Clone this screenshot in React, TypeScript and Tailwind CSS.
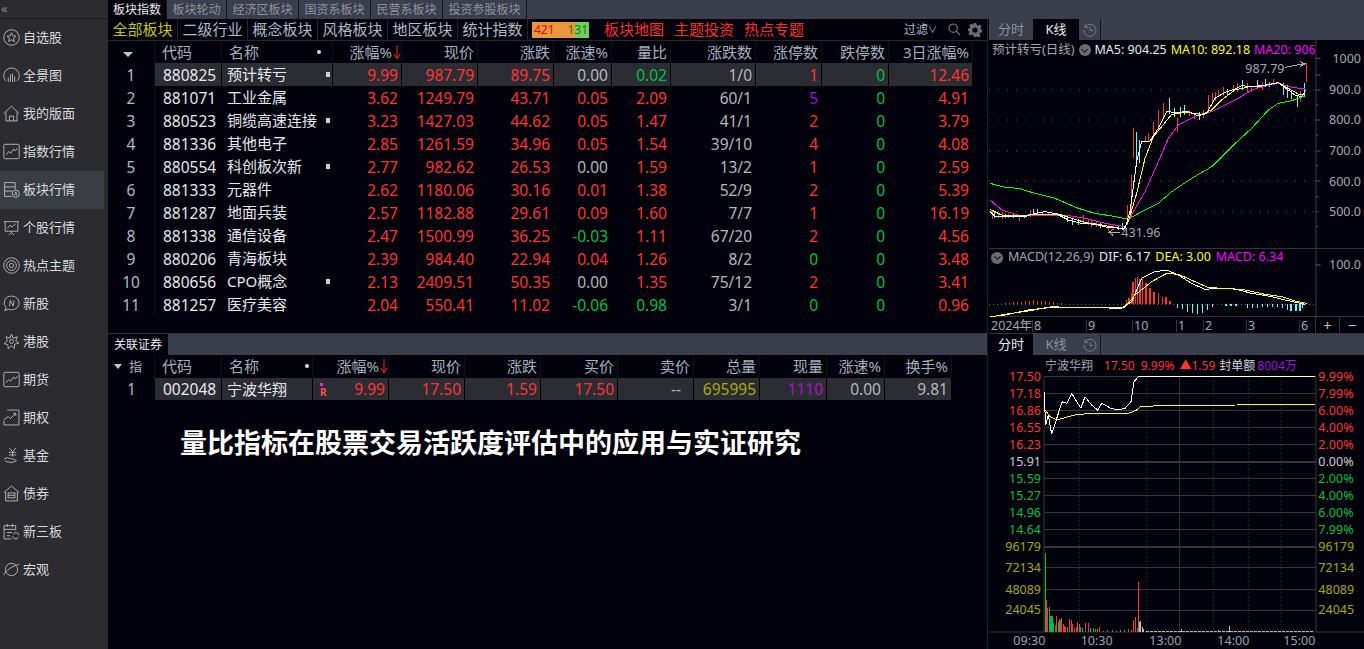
import React from "react";

const RED = "#ff3333";
const GREEN = "#00c040";
const CYAN = "#54ffff";

const Glyph = ({ children }: { children: React.ReactNode }) => (
  <svg viewBox="0 0 16 16" className="w-[17px] h-[17px] shrink-0" fill="none" stroke="#b4b4b4" strokeWidth="0.9">
    {children}
  </svg>
);

const icons: React.ReactNode[] = [
  <><circle cx="8" cy="8" r="7.3" /><path d="M8 3.6l1.3 2.9 3 .3-2.3 2 .7 3L8 10.2 5.3 11.8l.7-3-2.3-2 3-.3z" /></>,
  <><path d="M2.5 13A7.3 7.3 0 1 1 13.5 13" /><path d="M5 14V10M7 14V7M9 14V6M11 14V9" /></>,
  <><path d="M.8 8L8 1.2 15.2 8" /><path d="M2.8 7v8h10.4V7" /><path d="M6 15v-4.5h4V15" /></>,
  <><rect x=".8" y="1.2" width="14.4" height="13.6" rx="1" /><path d="M3 11l2.5-3 2 1.5L10 5.500l1.500 2L13.500 5" /></>,
  <><path d="M8 14.500H1.500V1.500h10V8" /><path d="M1.500 5.500h10M1.500 9.500h7" /><circle cx="12" cy="12" r="3.400" /><path d="M10.800 13.800L12 10.200l1.200 3.600" /></>,
  <><path d="M.8 2.500h14.400M2 2.500v9h12v-9M8 11.500V13M5.500 15L8 13l2.500 2" /><path d="M4 9l2.500-3 2 1.500L12 4.500" /></>,
  <><circle cx="8" cy="8" r="7.300" /><circle cx="8" cy="8" r="4.600" /><circle cx="8" cy="8" r="2" /></>,
  <><path d="M8 1a7 6.500 0 0 0-5 11l-1.500 2.800 3.500-1.500A7 6.500 0 1 0 8 1z" /><path d="M6 10.500L7 5l2.500 5.500L10.500 5" /></>,
  <><path d="M8 1l1.500 4 4-1.500-1.500 4 3 2-4 1-.5 4L8 12l-3 3-.5-4-3.500-1 3-2.500L3 3.500l3.500 1.500z" /><circle cx="8" cy="8" r="1.800" /></>,
  <><rect x=".8" y="1.200" width="14.400" height="13.600" rx="1" /><path d="M3 11l2.500-3 2 1.500L10 5.500l1.500 2L13.500 5" /></>,
  <><path d="M4 1H15V15H1V11" /><path d="M1 10l4-3 2 2 5-5M9.500 4H12v2.500" /></>,
  <><path d="M6 1l3 3.500L12 1M5.500 5h7M5.500 7.500h7M9 4.500V9" /><path d="M1 11.500l3-1.500 3 1 4 .5 1.500 1.500-4 1.500-4.500-.5-2-1" /></>,
  <><path d="M.8 7L8 1l7.200 6" /><path d="M2.500 6.500V15h11V6.500" /><rect x="4.800" y="7.500" width="6.400" height="4.500" /><path d="M4.800 9.700h6.400" /></>,
  <><path d="M8 15H1V2.500h11V7M1 6h11M4 .8v3M9 .8v3M3.500 9h5M3.500 12h3" /><path d="M15 11.500a3 3 0 0 0-5.500-1M9 12.500a3 3 0 0 0 5.500 1" /></>,
  <><circle cx="8" cy="8" r="5.800" /><path d="M1 13.500c-1-1.500 4-6 8-8s6-3 6.500-1.800" /></>,
];

const menu = ["自选股", "全景图", "我的版面", "指数行情", "板块行情", "个股行情", "热点主题", "新股", "港股", "期货", "期权", "基金", "债券", "新三板", "宏观"];

const topTabs = [
  ["板块指数", "w-[59px]"],
  ["板块轮动", "w-[60px]"],
  ["经济区板块", "w-[72px]"],
  ["国资系板块", "w-[72px]"],
  ["民营系板块", "w-[72px]"],
  ["投资参股板块", "w-[84px]"],
];

const subTabs = ["全部板块", "二级行业", "概念板块", "风格板块", "地区板块", "统计指数"];

const rows: [string, string, boolean, string, string, string, string, string, string, string, string][] = [
  ["880825", "预计转亏", true, "9.99", "987.79", "89.75", "0.00", "0.02", "1/0", "1", "12.46"],
  ["881071", "工业金属", false, "3.62", "1249.79", "43.71", "0.05", "2.09", "60/1", "5", "4.91"],
  ["880523", "铜缆高速连接", true, "3.23", "1427.03", "44.62", "0.05", "1.47", "41/1", "2", "3.79"],
  ["881336", "其他电子", false, "2.85", "1261.59", "34.96", "0.05", "1.54", "39/10", "4", "4.08"],
  ["880554", "科创板次新", true, "2.77", "982.62", "26.53", "0.00", "1.59", "13/2", "1", "2.59"],
  ["881333", "元器件", false, "2.62", "1180.06", "30.16", "0.01", "1.38", "52/9", "2", "5.39"],
  ["881287", "地面兵装", false, "2.57", "1182.88", "29.61", "0.09", "1.60", "7/7", "1", "16.19"],
  ["881338", "通信设备", false, "2.47", "1500.99", "36.25", "-0.03", "1.11", "67/20", "2", "4.56"],
  ["880206", "青海板块", false, "2.39", "984.40", "22.94", "0.04", "1.26", "8/2", "0", "3.48"],
  ["880656", "CPO概念", true, "2.13", "2409.51", "50.35", "0.00", "1.35", "75/12", "2", "3.41"],
  ["881257", "医疗美容", false, "2.04", "550.41", "11.02", "-0.06", "0.98", "3/1", "0", "0.96"],
];

const mainGrid = "grid grid-cols-[47px_67px_101px_10px_69px_76px_76px_58px_59px_85px_66px_67px_84px] w-[865px]";
const subGrid = "grid grid-cols-[47px_67px_91px_76px_76px_76px_77px_76px_66px_67px_58px_67px] w-[844px]";

const cellBase = "flex items-center justify-end border-r whitespace-nowrap overflow-hidden";
const bodyCell = `${cellBase} pr-[3px] pt-[2px] border-[#02020c]`;

const signColor = (v: string) => {
  const n = parseFloat(v);
  if (n > 0) return "text-[#ff3333]";
  if (n < 0) return "text-[#00c040]";
  return "text-[#b4b8bd]";
};

const HeadCell = ({ children, arrow }: { children?: React.ReactNode; arrow?: boolean }) => (
  <div className={`${cellBase} border-[#10101a] pb-[4px] ${arrow ? "" : "pr-[3px]"}`}>
    {children}
    {arrow && (
      <svg viewBox="0 0 8 15" className="w-[8px] h-[15px] ml-px" fill="none" stroke="#ff2020" strokeWidth="1">
        <path d="M4 0v13M1 9l3 5 3-5" />
      </svg>
    )}
  </div>
);

const NameDot = () => <span className="w-[4px] h-[4px] rounded-full bg-[#d8d8d8]" />;

const MainTable = () => (
  <div className="text-[15.5px]">
    <div className={`${mainGrid} h-[22px] text-[15px] text-[#a3b0bd]`}>
      <div className="flex items-center justify-center border-r border-[#10101a] pr-[6px]">
        <span className="w-0 h-0 border-x-[5px] border-x-transparent border-t-[5px] border-t-[#c8c8c8]" />
      </div>
      <div className="flex items-center pl-[7px] pb-[4px] border-r border-[#10101a]">代码</div>
      <div className="flex items-center justify-between pl-[7px] pr-[2px] pb-[4px]">名称<NameDot /></div>
      <HeadCell />
      <HeadCell arrow>涨幅%</HeadCell>
      <HeadCell>现价</HeadCell>
      <HeadCell>涨跌</HeadCell>
      <HeadCell>涨速%</HeadCell>
      <HeadCell>量比</HeadCell>
      <HeadCell>涨跌数</HeadCell>
      <HeadCell>涨停数</HeadCell>
      <HeadCell>跌停数</HeadCell>
      <HeadCell>3日涨幅%</HeadCell>
    </div>
    {rows.map((r, i) => {
      const sel = i === 0 ? "bg-[#2b2d33]" : "";
      return (
        <div key={r[0]} className={`${mainGrid} h-[23px] leading-none`}>
          <div className="flex items-center justify-center pt-[2px] text-[#a9bccb] border-r border-[#10101a]">{i + 1}</div>
          <div className={`flex items-center pl-[8px] pt-[2px] text-[#e4e8ee] border-r border-[#02020c] ${sel}`}>{r[0]}</div>
          <div className={`flex items-center pl-[5px] text-[15px] text-[#e4e8ee] whitespace-nowrap ${sel}`}>{r[1]}</div>
          <div className={`flex items-center border-r border-[#02020c] ${sel}`}>
            {r[2] && <span className="ml-[3px] w-[4px] h-[5px] bg-[#d0d0d0]" />}
          </div>
          <div className={`${bodyCell} text-[#ff3333] ${sel}`}>{r[3]}</div>
          <div className={`${bodyCell} text-[#ff3333] ${sel}`}>{r[4]}</div>
          <div className={`${bodyCell} text-[#ff3333] ${sel}`}>{r[5]}</div>
          <div className={`${bodyCell} ${signColor(r[6])} ${sel}`}>{r[6]}</div>
          <div className={`${bodyCell} ${parseFloat(r[7]) < 1 ? "text-[#00c040]" : "text-[#ff3333]"} ${sel}`}>{r[7]}</div>
          <div className={`${bodyCell} text-[#b4b8bd] ${sel}`}>{r[8]}</div>
          <div className={`${bodyCell} ${r[9] === "5" ? "text-[#a010d8]" : r[9] === "0" ? "text-[#00c040]" : "text-[#ff3333]"} ${sel}`}>{r[9]}</div>
          <div className={`${bodyCell} text-[#00c040] ${sel}`}>0</div>
          <div className={`${bodyCell} text-[#ff3333] ${sel}`}>{r[10]}</div>
        </div>
      );
    })}
  </div>
);

const SubTable = () => {
  const cell = `${bodyCell} bg-[#2b2d33]`;
  const left = "flex items-center text-[#e4e8ee] bg-[#2b2d33] border-r border-[#02020c]";
  return (
    <div className="text-[15.5px]">
      <div className={`${subGrid} h-[23px] text-[15px] text-[#a3b0bd]`}>
        <div className="flex items-center pl-[6px] gap-[7px] pb-[4px] border-r border-[#10101a]">
          <span className="w-0 h-0 border-x-[4px] border-x-transparent border-t-[5px] border-t-[#c8c8c8]" />
          <span className="text-[13px]">指</span>
        </div>
        <div className="flex items-center pl-[7px] pb-[4px] border-r border-[#10101a]">代码</div>
        <div className="flex items-center justify-between pl-[7px] pr-[3px] pb-[4px] border-r border-[#10101a]">名称<NameDot /></div>
        <HeadCell arrow>涨幅%</HeadCell>
        <HeadCell>现价</HeadCell>
        <HeadCell>涨跌</HeadCell>
        <HeadCell>买价</HeadCell>
        <HeadCell>卖价</HeadCell>
        <HeadCell>总量</HeadCell>
        <HeadCell>现量</HeadCell>
        <HeadCell>涨速%</HeadCell>
        <HeadCell>换手%</HeadCell>
      </div>
      <div className={`${subGrid} h-[22px] leading-none`}>
        <div className="flex items-center justify-center pt-[2px] text-[#a9bccb]">1</div>
        <div className={`${left} pl-[8px] pt-[2px]`}>002048</div>
        <div className={`${left} pl-[5px] text-[15px]`}>宁波华翔</div>
        <div className={`${cell} !justify-between text-[#ff3333]`}>
          <span className="flex flex-col pl-[7px] items-start">
            <span className="w-[3px] h-[3px] bg-[#e820e8]" />
            <span className="text-[10px] font-bold text-[#ff5050] leading-[12px]">R</span>
          </span>
          9.99
        </div>
        <div className={`${cell} text-[#ff3333]`}>17.50</div>
        <div className={`${cell} text-[#ff3333]`}>1.59</div>
        <div className={`${cell} text-[#ff3333]`}>17.50</div>
        <div className={`${cellBase} pr-[12px] pt-[2px] border-[#02020c] bg-[#2b2d33] text-[#b4b8bd]`}>--</div>
        <div className={`${cell} text-[#a8a800]`}>695995</div>
        <div className={`${cell} text-[#b010c8]`}>1110</div>
        <div className={`${cell} text-[#b4b8bd]`}>0.00</div>
        <div className={`${cell} text-[#b4b8bd]`}>9.81</div>
      </div>
    </div>
  );
};

const PanelTabs = ({ active }: { active: 0 | 1 }) => (
  <div className="flex h-[21px] bg-[#3b3e4c] text-[13px] leading-none shrink-0">
    <div className={`w-[44px] flex items-center justify-center ${active === 0 ? "bg-[#02020c] text-[#e8ecf0]" : "text-[#8e929c]"}`}>分时</div>
    <div className={`w-[46px] flex items-center justify-center ${active === 1 ? "bg-[#02020c] text-[#e8ecf0]" : "text-[#8e929c]"}`}>K线</div>
    <div className="w-[22px] flex items-center justify-center border-r border-[#15151c]">
      <svg viewBox="0 0 14 14" className="w-[14px] h-[14px]" fill="none" stroke="#777a84" strokeWidth="1">
        <path d="M2 4a6 6 0 1 1-1 3M2 1.500V4.500h3M7 4v3.500h3" />
      </svg>
    </div>
  </div>
);

const candles: [number, number, number, string][] = [
  [20, 585, 612, RED], [28, 590, 610, CYAN], [38, 595, 608, RED], [50, 592, 612, RED], [60, 598, 608, CYAN], [70, 598, 610, RED], [85, 595, 608, CYAN], [102, 600, 618, RED],
  [118, 600, 610, CYAN], [134, 585, 605, RED], [143, 582, 600, CYAN], [155, 582, 598, CYAN], [170, 590, 600, CYAN], [190, 594, 604, RED], [245, 600, 620, CYAN],
  [262, 610, 630, CYAN], [280, 612, 630, CYAN], [295, 600, 625, RED], [308, 612, 630, RED], [318, 615, 635, RED], [332, 622, 636, RED], [345, 625, 640, CYAN], [368, 630, 648, RED],
  [385, 632, 645, RED], [400, 630, 645, CYAN], [412, 625, 645, CYAN], [427, 570, 630, RED], [437, 480, 605, RED], [443, 340, 430, RED], [452, 350, 445, CYAN],
  [463, 375, 445, CYAN], [480, 362, 382, RED], [490, 355, 382, RED], [505, 320, 362, RED], [520, 285, 345, RED], [535, 265, 312, RED],
  [552, 250, 298, CYAN], [566, 280, 305, CYAN], [575, 310, 350, RED], [585, 275, 305, CYAN], [598, 270, 300, CYAN], [612, 285, 302, RED],
  [628, 295, 312, RED], [643, 290, 315, CYAN], [655, 285, 310, RED], [668, 240, 295, RED], [680, 235, 262, RED], [690, 230, 258, RED],
  [700, 225, 245, RED], [715, 215, 242, RED], [725, 222, 242, CYAN], [745, 210, 232, RED], [755, 205, 230, RED], [770, 195, 226, CYAN],
  [785, 205, 232, RED], [797, 215, 232, RED], [815, 195, 220, CYAN], [830, 200, 225, RED], [840, 192, 215, CYAN], [852, 200, 215, CYAN],
  [865, 192, 210, RED], [895, 205, 240, CYAN], [905, 210, 250, CYAN], [918, 228, 252, CYAN], [935, 240, 275, CYAN], [945, 228, 262, RED],
  [958, 205, 245, CYAN], [964, 145, 200, RED],
];

const KChart = () => (
  <div className="relative h-[209px] shrink-0">
    <svg viewBox="12 75 1125 627" className="w-[375px] h-[209px] block">
      {[225, 315, 408, 498, 590].map((y) => (
        <line key={y} x1="12" x2="993" y1={y} y2={y} stroke="#55555c" strokeWidth="3" strokeDasharray="3 24" />
      ))}
      <line x1="993" x2="993" y1="75" y2="702" stroke="#3a3a40" strokeWidth="3" />
      {[130, 180, 225, 270, 315, 360, 408, 452, 498, 545, 590, 635].map((y) => (
        <line key={y} x1="993" x2={y === 130 || (y - 225) % 90 < 5 ? 1007 : 1000} y1={y} y2={y} stroke="#55555c" strokeWidth="3" />
      ))}
      {candles.map(([x, a, b, c], i) => (
        <rect key={i} x={x} y={a} width="3" height={b - a} fill={c} shapeRendering="crispEdges" />
      ))}
      <g fill="none" strokeWidth="3" shapeRendering="crispEdges">
        <polyline stroke="#00ff00" points="15,505 60,517 100,520 150,535 210,550 280,580 330,595 380,603 430,613 470,590 520,565 560,530 620,490 680,455 740,395 800,340 850,285 880,265 920,257 960,243" />
        <polyline stroke="#ff00ff" points="15,555 50,585 100,600 180,600 240,600 300,610 360,625 420,635 445,590 480,530 520,440 550,370 580,330 640,300 680,290 720,270 760,250 800,225 840,213 880,205 920,217 960,222" />
        <polyline stroke="#ffff00" points="15,583 50,600 100,603 150,598 220,597 260,610 300,622 350,630 415,642 430,620 455,535 480,430 505,365 530,335 560,298 600,292 650,298 680,285 710,255 750,225 790,216 830,213 880,203 910,220 945,240 960,235" />
        <polyline stroke="#ffffff" points="15,590 30,605 60,603 120,605 150,595 180,590 215,597 250,615 290,625 330,628 370,638 420,640 435,590 455,440 470,378 495,378 520,340 545,290 570,292 610,290 640,303 665,295 690,250 720,232 750,222 770,212 800,215 840,210 880,203 910,225 930,240 950,245 962,225" />
        <path stroke="#b0b0b0" d="M900 157L958 146M945 140L960 146L945 155M372 652H405M385 642L372 652L385 662" />
      </g>
      <g fill="#a4a8ae" fontSize="37.500">
        <text x="781" y="173">987.79</text>
        <text x="409" y="665">431.96</text>
      </g>
      <g fill="#a4a8ae" fontSize="37.500" textAnchor="end">
        {["1000", "900.0", "800.0", "700.0", "600.0", "500.0"].map((t, i) => (
          <text key={t} x="1128" y={144 + i * 92}>{t}</text>
        ))}
      </g>
    </svg>
    <div className="absolute top-[1px] left-[3px] w-[323px] h-[18px] flex items-center gap-[4px] overflow-hidden whitespace-nowrap text-[12.500px] leading-none">
      <span className="text-[#a4a8ae] w-[83px]">预计转亏(日线)</span>
      <span className="w-[12px] h-[12px] rounded-full bg-[#6c6c6c] shrink-0 flex items-center justify-center">
        <span className="w-[5px] h-[5px] border-r border-b border-[#111] rotate-45 -mt-[2px]" />
      </span>
      <span className="text-[#e6ecf4]">MA5: 904.25</span>
      <span className="text-[#ffff00]">MA10: 892.18</span>
      <span className="text-[#ff00ff]">MA20: 906.41</span>
    </div>
  </div>
);

const macdRed = [60, 72, 84, 96, 108, 120, 132, 144, 156, 168, 180, 192, 204, 216, 228];
const macdRedH = [4, 5, 6, 7, 8, 9, 11, 13, 11, 10, 9, 7, 6, 4, 3];
const macdTall: [number, number][] = [[422, 165], [430, 160], [437, 145], [442, 110], [449, 100], [455, 97], [462, 102], [470, 103], [480, 115], [492, 128], [505, 140], [518, 145], [530, 155], [540, 157], [553, 168]];
const macdCyan: [number, number][] = [[575, 190], [590, 192], [605, 200], [620, 205], [635, 208], [650, 205], [665, 195], [680, 185], [720, 184], [735, 182], [750, 182], [785, 188], [800, 189], [815, 188], [830, 186], [845, 186], [860, 186], [875, 186], [890, 188], [905, 196], [915, 198], [930, 198], [942, 198], [950, 190]];

const MacdChart = () => (
  <div className="relative h-[68px] border-t border-[#33333a] shrink-0 -mt-px">
    <svg viewBox="12 12 1125 204" className="w-[375px] h-[68px] block">
      <line x1="12" x2="993" y1="178" y2="178" stroke="#70757a" strokeWidth="3" strokeDasharray="3 9" />
      <line x1="993" x2="993" y1="12" y2="216" stroke="#3a3a40" strokeWidth="3" />
      <line x1="993" x2="1007" y1="60" y2="60" stroke="#55555c" strokeWidth="3" />
      <g shapeRendering="crispEdges">
        {macdRed.map((x, i) => (
          <rect key={x} x={x} y={178 - macdRedH[i]} width="3" height={macdRedH[i]} fill={RED} />
        ))}
        {macdTall.map(([x, y]) => (
          <rect key={x} x={x} y={y} width="5" height={178 - y} fill={RED} />
        ))}
        {macdCyan.map(([x, y]) => (
          <rect key={x} x={x} y={178} width="5" height={y - 178} fill={CYAN} />
        ))}
      </g>
      <g fill="none" strokeWidth="3" shapeRendering="crispEdges">
        <polyline stroke="#ffffff" points="15,215 60,210 130,195 200,187 260,187 330,188 410,190 440,170 470,100 510,80 545,75 580,90 620,115 660,133 700,130 750,132 800,145 860,155 900,165 960,178" />
        <polyline stroke="#ffff00" points="15,216 60,208 130,198 200,185 260,188 330,188 420,187 450,150 500,110 545,85 580,88 630,110 670,128 720,130 780,135 840,148 890,155 930,168 965,175" />
      </g>
      <text x="1128" y="72" textAnchor="end" fill="#a4a8ae" fontSize="37.500">100.0</text>
    </svg>
    <div className="absolute top-[1px] left-[2px] h-[15px] flex items-center gap-[5px] whitespace-nowrap text-[12.500px] leading-none">
      <span className="w-[12px] h-[12px] rounded-full bg-[#6c6c6c] shrink-0 flex items-center justify-center">
        <span className="w-[5px] h-[5px] border-r border-b border-[#111] rotate-45 -mt-[2px]" />
      </span>
      <span className="text-[#a4a8ae]">MACD(12,26,9)</span>
      <span className="text-[#e6ecf4]">DIF: 6.17</span>
      <span className="text-[#ffff00]">DEA: 3.00</span>
      <span className="text-[#ff00ff]">MACD: 6.34</span>
    </div>
  </div>
);

const months = [
  ["8", "w-[54px]"],
  ["9", "w-[46px]"],
  ["10", "w-[44px]"],
  ["1", "w-[27px]"],
  ["2", "w-[43px]"],
  ["3", "w-[53px]"],
  ["6", "w-[14px]"],
];

const KAxis = () => (
  <div className="flex h-[18px] border-y border-[#33333a] text-[12.500px] text-[#a4a8ae] leading-none shrink-0">
    <div className="w-[327px] flex items-center pl-[2px] pt-[2px] border-r border-[#33333a] whitespace-nowrap">
      <span className="w-[41px]">2024年</span>
      {months.map(([m, w]) => (
        <span key={m} className={`${w} border-l border-[#33333a] pl-px`}>{m}</span>
      ))}
    </div>
    <div className="w-[24px] flex items-center justify-center border-r border-[#33333a] text-[15px] text-[#c0c0c0]">+</div>
    <div className="w-[24px] flex items-center justify-center text-[15px] text-[#c0c0c0]">−</div>
  </div>
);

const priceLabels: [string, string, string][] = [
  ["17.50", "9.99%", "#ff3333"],
  ["17.18", "7.99%", "#ff3333"],
  ["16.86", "6.00%", "#ff3333"],
  ["16.55", "4.00%", "#ff3333"],
  ["16.23", "2.00%", "#ff3333"],
  ["15.91", "0.00%", "#c8ccd0"],
  ["15.59", "2.00%", "#00c040"],
  ["15.27", "4.00%", "#00c040"],
  ["14.96", "6.00%", "#00c040"],
  ["14.64", "7.99%", "#00c040"],
];
const priceY = [395, 446, 497, 548, 599, 650, 700, 751, 802, 853];
const volY: [string, number][] = [["96179", 905], ["72134", 967], ["48089", 1033], ["24045", 1095]];

const volBars: [number, number, string][] = [
  [180, 325, GREEN], [183, 465, RED], [186, 490, RED], [192, 487, GREEN], [195, 512, GREEN], [198, 512, GREEN], [201, 512, GREEN], [205, 535, GREEN],
  [210, 540, RED], [214, 512, RED], [218, 530, GREEN], [222, 522, GREEN], [225, 525, RED], [229, 520, RED], [233, 538, RED], [237, 542, RED], [241, 545, RED],
  [246, 545, GREEN], [253, 522, RED], [257, 525, RED], [262, 537, RED], [267, 550, GREEN], [272, 545, RED], [277, 532, RED], [281, 538, RED], [285, 545, GREEN],
  [290, 548, GREEN], [300, 535, RED], [308, 533, RED], [316, 550, GREEN], [324, 550, GREEN], [330, 553, GREEN], [336, 553, GREEN], [343, 545, RED], [355, 557, GREEN],
  [365, 556, GREEN], [380, 556, RED], [392, 557, GREEN], [405, 556, GREEN], [418, 556, RED], [430, 553, RED], [438, 555, GREEN], [445, 525, RED], [449, 517, RED],
  [456, 550, GREEN], [460, 410, RED], [463, 530, "#c0c0c0"], [466, 527, "#c0c0c0"], [470, 545, "#c0c0c0"], [475, 552, "#c0c0c0"], [588, 552, "#c0c0c0"], [700, 555, "#c0c0c0"], [733, 543, "#c0c0c0"],
];

const TickChart = () => (
  <div className="relative flex-1 min-h-0">
    <svg viewBox="12 330 1125 882" className="w-[375px] h-[294px] block">
      {priceY.concat([905, 967, 1033, 1095]).map((y) => (
        <line key={y} x1="177" x2="993" y1={y} y2={y} stroke="#36363b" strokeWidth={y === 650 || y === 905 ? 6 : 3} shapeRendering="crispEdges" />
      ))}
      <line x1="177" x2="177" y1="395" y2="1161" stroke="#36363b" strokeWidth="3" />
      <line x1="993" x2="993" y1="395" y2="1161" stroke="#36363b" strokeWidth="3" />
      <line x1="584" x2="584" y1="395" y2="1161" stroke="#36363b" strokeWidth="3" />
      {[283, 485, 686, 790, 888].map((x) => (
        <line key={x} x1={x} x2={x} y1="395" y2="1161" stroke="#44444a" strokeWidth="3" strokeDasharray="3 9" />
      ))}
      <line x1="12" x2="1137" y1="1161" y2="1161" stroke="#36363b" strokeWidth="3" />
      <g shapeRendering="crispEdges">
        {volBars.map(([x, y, c]) => (
          <rect key={x} x={x} y={y + 600} width="3" height={560 - y} fill={c} />
        ))}
        {Array.from({ length: 42 }, (_, i) => (
          <rect key={i} x={484 + i * 12} y="1157" width="9" height="3" fill="#b8b8b8" />
        ))}
      </g>
      <g fill="none" strokeWidth="3" shapeRendering="crispEdges">
        <polyline stroke="#ffff00" points="177,490 195,515 215,525 250,515 280,508 330,505 430,505 455,495 468,484 540,482 755,480 990,478" />
        <polyline stroke="#ffffff" points="177,440 182,540 190,510 200,568 212,530 225,490 232,470 245,475 260,445 275,470 288,490 300,455 320,480 338,495 350,475 378,490 400,495 420,490 438,470 447,410 460,395 990,395" />
      </g>
      <g fontSize="37.500">
        {priceLabels.map(([l, r, c], i) => (
          <g key={l} fill={c}>
            <text x="168" y={priceY[i] + 13} textAnchor="end">{l}</text>
            <text x="1000" y={priceY[i] + 13}>{r}</text>
          </g>
        ))}
        {volY.map(([t, y]) => (
          <g key={t} fill="#a8a800">
            <text x="168" y={y + 13} textAnchor="end">{t}</text>
            <text x="1000" y={y + 13}>{t}</text>
          </g>
        ))}
        <g fill="#9aa2ac">
          {[["09:30", 85], ["10:30", 287], ["13:00", 493], ["14:00", 697], ["15:00", 895]].map(([t, x]) => (
            <text key={t} x={x} y="1199">{t}</text>
          ))}
        </g>
      </g>
    </svg>
    <div className="absolute top-[3px] left-[56px] h-[16px] flex items-center whitespace-nowrap text-[12px] leading-none text-[#ff3333]">
      <span className="text-[#a4a8ae] mr-[11px]">宁波华翔</span>
      <span className="mr-[6px]">17.50</span>
      <span className="mr-[5px]">9.99%</span>
      <span className="mr-[4px]">▲1.59</span>
      <span className="text-[#d4d8dc] mr-[2px]">封单额</span>
      <span className="text-[#a010d8]">8004万</span>
    </div>
  </div>
);

export default function App() {
  return (
    <div className="flex h-screen w-screen overflow-hidden bg-[#02020c] font-['Noto_Sans','Noto_Sans_CJK_SC',sans-serif]">
      <aside className="w-[108px] shrink-0 bg-[#2b2b30] text-[13px] text-[#d6dade]">
        <div className="h-[19px] border-b border-[#1b1b1f] pl-[1px] text-[13px] leading-[16px] text-[#8a8a8e]">«</div>
        {menu.map((m, i) => (
          <div key={m} className={`h-[38px] w-[104px] flex items-center gap-[3px] pl-[3px] pb-[1px] leading-none ${i === 4 ? "bg-[#3b3d45]" : ""}`}>
            <Glyph>{icons[i]}</Glyph>
            <span>{m}</span>
          </div>
        ))}
      </aside>

      <div className="flex-1 min-w-0 flex flex-col">
        <div className="flex h-[19px] bg-[#3b3e4c] text-[12px] leading-none text-[#8e929c] shrink-0">
          {topTabs.map(([t, w], i) => (
            <div key={t} className={`${w} flex items-center justify-center border-r border-[#15151c] ${i === 0 ? "bg-[#02020c] text-[#e8ecf0]" : ""}`}>{t}</div>
          ))}
        </div>

        <div className="flex flex-1 min-h-0">
          <main className="w-[880px] shrink-0 flex flex-col border-r border-[#1e1e24]">
            <div className="flex items-center h-[22px] border-b border-[#25252b] text-[15px] leading-none shrink-0 whitespace-nowrap">
              {subTabs.map((t, i) => (
                <div key={t} className={`w-[70px] h-full flex items-center justify-center border-r border-[#25252b] ${i === 0 ? "text-[#c8c800]" : "text-[#aebac6]"}`}>{t}</div>
              ))}
              <div className="ml-[4px] w-[57px] h-[16px] flex items-center justify-between text-[12px] bg-[linear-gradient(90deg,#e8983a_0,#e8983a_43px,#6fcf5a_43px)]">
                <span className="pl-[2px] text-[#d01020]">421</span>
                <span className="pr-[1px] text-[#1c7a18]">131</span>
              </div>
              <div className="ml-[15px] flex gap-[10px] text-[#ff2a2a]">
                <span>板块地图</span>
                <span>主题投资</span>
                <span>热点专题</span>
              </div>
              <div className="ml-auto mr-[5px] flex items-center">
                <span className="text-[12px] text-[#aebac6]">过滤</span>
                <span className="text-[9px] text-[#aebac6] mr-[11px]">∨</span>
                <svg viewBox="0 0 15 15" className="w-[13px] h-[13px] mr-[7px]" fill="none" stroke="#6c6e74" strokeWidth="1.500">
                  <circle cx="6" cy="6" r="4.800" />
                  <path d="M9.500 9.500L14 14" />
                </svg>
                <svg viewBox="0 0 16 16" className="w-[14px] h-[14px]" fill="#6c6e74">
                  <path fillRule="evenodd" d="M6.500 0h3l.5 2.300 1.500.7 2-1.200 2 2.200-1.200 2 .6 1.500L16 8v2.500l-2.200.5-.7 1.500 1.200 2-2 2-2-1.200-1.500.6L8.500 16h-2l-.5-2.300-1.500-.6-2 1.200-2-2 1.200-2L1 8.800 0 9V6.500l2-.4.7-1.500-1.200-2 2-2 2 1.200 1-.4zM8 5a3 3 0 1 0 0 6 3 3 0 0 0 0-6z" />
                </svg>
              </div>
            </div>
            <MainTable />
            <div className="mt-[17px] h-[22px] border-t border-[#33333a] bg-[#3b3e4c] flex text-[12px] leading-none shrink-0">
              <div className="w-[60px] flex items-center justify-center bg-[#02020c] text-[#e8ecf0]">关联证券</div>
            </div>
            <SubTable />
            <h1 className="mt-[28px] pl-[72px] text-[27px] leading-[30px] font-bold text-white whitespace-nowrap">量比指标在股票交易活跃度评估中的应用与实证研究</h1>
          </main>

          <section className="w-[376px] shrink-0 flex flex-col pl-px">
            <PanelTabs active={1} />
            <KChart />
            <MacdChart />
            <KAxis />
            <PanelTabs active={0} />
            <TickChart />
          </section>
        </div>
      </div>
    </div>
  );
}
